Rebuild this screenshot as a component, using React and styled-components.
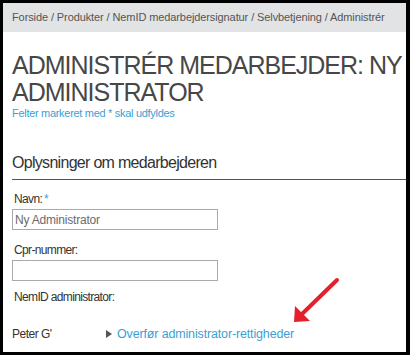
import React from "react";
import styled, { createGlobalStyle } from "styled-components";

const GlobalStyle = createGlobalStyle`
  html, body {
    margin: 0;
    padding: 0;
    background: #000;
  }
  body {
    font-family: "Liberation Sans", Arial, sans-serif;
  }
`;

const Frame = styled.div`
  position: relative;
  box-sizing: border-box;
  width: 410px;
  height: 355px;
  overflow: hidden;
  background: #fff;
  border: 3px solid #000;
  border-right-width: 4px;
`;

const Breadcrumb = styled.div`
  height: 29px;
  line-height: 29px;
  padding-left: 9px;
  background: #e1e3e5;
  color: #555;
  font-size: 11px;
  letter-spacing: -0.1px;
  white-space: nowrap;
`;

const Content = styled.div`
  padding-left: 9px;
`;

const Title = styled.h1`
  margin: 20px 0 0;
  font-size: 25px;
  line-height: 27px;
  letter-spacing: -1px;
  font-weight: normal;
  color: #474747;
`;

const Note = styled.div`
  font-size: 11px;
  line-height: 14px;
  letter-spacing: -0.3px;
  color: #3a9fd4;
`;

const SectionTitle = styled.h2`
  margin: 32px 0 0;
  padding-bottom: 5px;
  border-bottom: 1px solid #555;
  font-size: 16px;
  line-height: 22px;
  letter-spacing: -0.7px;
  font-weight: normal;
  color: #333;
`;

const Label = styled.div`
  margin-top: ${(p) => p.$gap}px;
  padding-left: 2px;
  font-size: 12px;
  line-height: 16px;
  letter-spacing: -0.65px;
  color: #333;
`;

const Required = styled.span`
  color: #3a9fd4;
  margin-left: 2px;
`;

const Input = styled.input`
  display: block;
  box-sizing: border-box;
  width: 206px;
  height: 21px;
  margin: 2px 0 0;
  padding: 0 2px;
  border: 1px solid #aaa;
  font-family: inherit;
  font-size: 12px;
  letter-spacing: -0.2px;
  color: #6b6b6b;
  background: #fff;
  outline: none;
`;

const AdminRow = styled.div`
  display: grid;
  grid-template-columns: 94px auto;
  align-items: center;
  margin-top: 21px;
  font-size: 12px;
  line-height: 16px;
  letter-spacing: -0.5px;
  color: #333;
`;

const TransferLink = styled.a`
  display: flex;
  align-items: center;
  gap: 5px;
  font-size: 12.5px;
  letter-spacing: -0.15px;
  color: #3a9fd4;
  text-decoration: none;
  cursor: pointer;
`;

const Triangle = styled.span`
  width: 0;
  height: 0;
  border-top: 4px solid transparent;
  border-bottom: 4px solid transparent;
  border-left: 6px solid #555;
`;

const Arrow = styled.svg`
  position: absolute;
  left: 282px;
  top: 267px;
`;

export default function App() {
  return (
    <>
      <GlobalStyle />
      <Frame>
        <Breadcrumb>
          Forside / Produkter / NemID medarbejdersignatur / Selvbetjening / Administrér
        </Breadcrumb>
        <Content>
          <Title>ADMINISTRÉR MEDARBEJDER: NY ADMINISTRATOR</Title>
          <Note>Felter markeret med * skal udfyldes</Note>
          <SectionTitle>Oplysninger om medarbejderen</SectionTitle>
          <Label $gap={11}>
            Navn:<Required>*</Required>
          </Label>
          <Input defaultValue="Ny Administrator" />
          <Label $gap={12}>Cpr-nummer:</Label>
          <Input defaultValue="" />
          <Label $gap={8}>NemID administrator:</Label>
          <AdminRow>
            <span>Peter G'</span>
            <TransferLink>
              <Triangle />
              Overfør administrator-rettigheder
            </TransferLink>
          </AdminRow>
        </Content>
        <Arrow width="60" height="60" viewBox="0 0 60 60">
          <line x1="52" y1="10" x2="16" y2="45" stroke="#e3202b" strokeWidth="4" strokeLinecap="round" />
          <polygon points="9,52 10,36 25,51" fill="#e3202b" />
        </Arrow>
      </Frame>
    </>
  );
}
